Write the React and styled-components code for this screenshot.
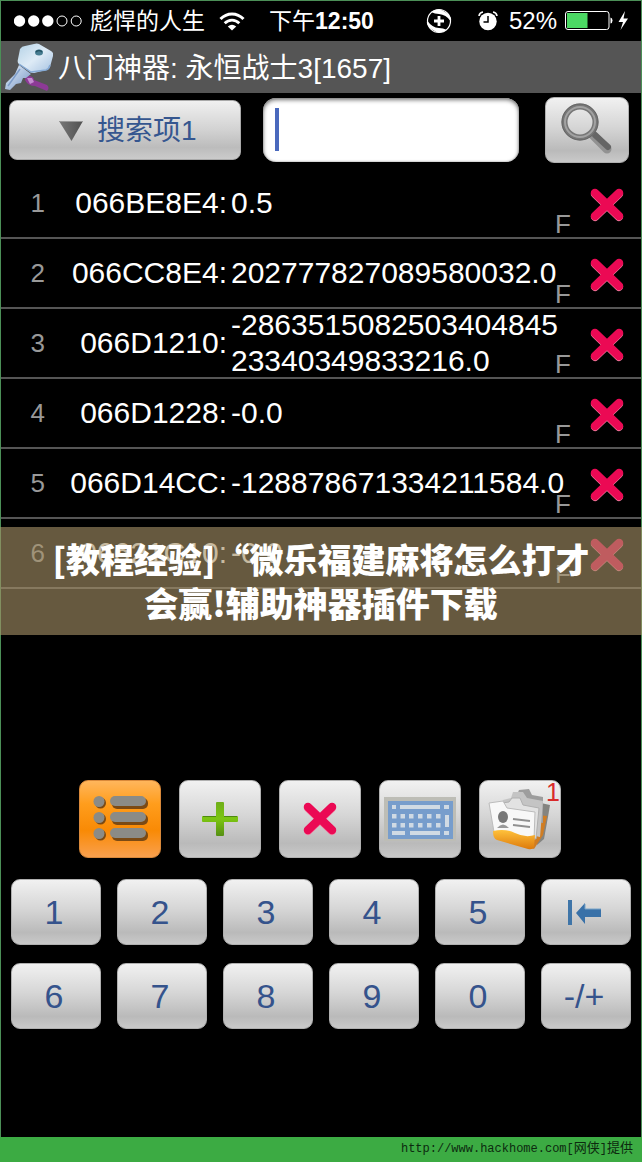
import React, { useState } from "react";
import styled, { createGlobalStyle } from "styled-components";

const GlobalStyle = createGlobalStyle`
  * {
    box-sizing: border-box;
  }
  body {
    margin: 0;
    background: #000;
    color: #fff;
    font-family: "Liberation Sans", "Noto Sans CJK SC", sans-serif;
  }
  button, input, select {
    font-family: inherit;
  }
`;

const Screen = styled.div`
  min-height: 100vh;
  display: flex;
  flex-direction: column;
`;
const Device = styled.main`
  flex: 1;
  display: flex;
  flex-direction: column;
  border: 1px solid #4b8f57;
  border-bottom: 0;
`;

const StatusBar = styled.header`
  height: 40px;
  padding: 0 12px 0 13px;
  display: grid;
  grid-template-columns: 1fr auto 1fr;
  align-items: center;
  font-size: 23px;
  line-height: 40px;
`;
const StatusGroup = styled.div`
  display: flex;
  align-items: center;
  justify-content: ${(props) => (props.$end ? "flex-end" : "flex-start")};
  svg {
    flex: none;
  }
`;
const Carrier = styled.span`
  margin: 0 14px 0 8px;
  white-space: nowrap;
`;
const Clock = styled.time`
  white-space: nowrap;
  b {
    font-weight: 700;
  }
`;
const Percent = styled.span`
  margin: 0 8px 0 11px;
  font-size: 24px;
`;
const Rotation = styled.svg`
  margin-right: 26px;
`;

const TitleBar = styled.div`
  height: 52px;
  padding-left: 4px;
  display: flex;
  align-items: center;
  gap: 5px;
  background: #555;
  h1 {
    margin: 0;
    padding-top: 4px;
    font-size: 28px;
    line-height: 48px;
    font-weight: 400;
  }
`;

const SearchBar = styled.form`
  height: 76px;
  padding: 0 12px 2px 8px;
  display: grid;
  grid-template-columns: 232fr 256fr 88px;
  column-gap: 22px;
  align-items: center;
`;
const SelectWrap = styled.div`
  position: relative;
  svg {
    position: absolute;
    left: 50px;
    top: 20px;
    pointer-events: none;
  }
`;
const SearchSelect = styled.select`
  appearance: none;
  width: 100%;
  height: 60px;
  padding: 0 0 0 87px;
  border: 1px solid #a9a9a9;
  border-radius: 8px;
  background: linear-gradient(#f0f0f0, #d2d2d2 50%, #bcbcbc 80%, #cbcbcb);
  color: #35568f;
  font-size: 28px;
`;
const FieldWrap = styled.div`
  position: relative;
`;
const SearchInput = styled.input`
  display: block;
  width: 100%;
  height: 64px;
  padding: 0 16px;
  border: 0;
  border-radius: 13px;
  background: #fff;
  box-shadow: inset 0 2px 4px #777, inset 0 0 2px #999;
  font-size: 30px;
  outline: none;
`;
const Caret = styled.span`
  position: absolute;
  left: 12px;
  top: 10px;
  width: 4px;
  height: 43px;
  background: #4a69bd;
`;

const GreyButton = styled.button`
  position: relative;
  display: flex;
  align-items: center;
  justify-content: center;
  padding: 0;
  border: 1px solid ${(props) => (props.$active ? "#d9893a" : "#b0b0b0")};
  border-radius: 9px;
  background: ${(props) =>
    props.$active
      ? "linear-gradient(#ffb65c, #ff9d1c 30%, #f98a05 65%, #f9a04e)"
      : "linear-gradient(#f1f1f1, #d6d6d6 45%, #bababa 82%, #c9c9c9)"};
  color: #35538c;
`;
const SearchButton = styled(GreyButton)`
  height: 66px;
  margin-left: 4px;
`;

const Results = styled.div`
  position: relative;
  flex: 1;
`;
const List = styled.ol`
  margin: 0;
  padding: 0;
  list-style: none;
`;
const Row = styled.li`
  border-bottom: 2px solid #555;
  display: grid;
  grid-template-columns: 52px 174px 1fr 70px;
  grid-template-rows: 68px;
  align-items: center;
  font-size: 30px;
  line-height: 36px;
`;
const Rank = styled.span`
  padding-right: 8px;
  color: #999;
  font-size: 26px;
  text-align: right;
`;
const Address = styled.span`
  text-align: right;
`;
const Value = styled.span`
  grid-area: 1 / 3;
  padding-left: 4px;
  word-break: break-all;
`;
const Type = styled.span`
  grid-area: 1 / 3;
  justify-self: end;
  align-self: end;
  color: #999;
  font-size: 26px;
  line-height: 26px;
`;
const RemoveButton = styled.button`
  grid-area: 1 / 4;
  height: 68px;
  padding: 4px 0 0 2px;
  display: flex;
  align-items: center;
  justify-content: center;
  border: 0;
  background: none;
`;

const Banner = styled.div`
  position: absolute;
  top: 358px;
  left: -1px;
  right: -1px;
  padding: 10px 50px;
  background: rgba(164, 143, 101, 0.62);
  font-family: "Noto Sans CJK SC", sans-serif;
  font-size: 34px;
  line-height: 44px;
  font-weight: 900;
  text-align: center;
  p {
    margin: 0;
    white-space: nowrap;
  }
`;

const Pad = styled.section`
  padding: 0 10px 108px;
`;
const Tools = styled.div`
  display: flex;
  justify-content: center;
  gap: 18px;
  margin: 0 2px 21px 0;
`;
const Tool = styled(GreyButton)`
  width: 82px;
  height: 78px;
`;
const Count = styled.span`
  position: absolute;
  top: -3px;
  right: 0;
  color: #d92a2a;
  font-size: 25px;
  line-height: 28px;
`;
const Keys = styled.div`
  display: grid;
  grid-template-columns: repeat(6, 1fr);
  gap: 18px 16px;
`;
const Key = styled(GreyButton)`
  height: 66px;
  padding-right: 4px;
  font-size: 34px;
`;

const Footer = styled.footer`
  height: 25px;
  padding: 0 9px 2px;
  display: flex;
  align-items: center;
  justify-content: flex-end;
  background: #3cab43;
  a {
    color: #0c2a0f;
    font-family: "Liberation Mono", "Noto Sans CJK SC", monospace;
    font-size: 12px;
    line-height: 20px;
    text-decoration: none;
  }
  span {
    font-size: 13px;
  }
`;

const ROWS = [
  { address: "066BE8E4", value: "0.5" },
  { address: "066CC8E4", value: "202777827089580032.0" },
  { address: "066D1210", value: "-286351508250340484523340349833216.0" },
  { address: "066D1228", value: "-0.0" },
  { address: "066D14CC", value: "-128878671334211584.0" },
  { address: "06621C10", value: "-0.0" },
];

function SignalIcon() {
  return (
    <svg width="68" height="14" viewBox="0 0 68 14">
      {[5.5, 19.7, 33.8].map((x) => (
        <circle key={x} cx={x} cy="7" r="5.7" fill="#fff" />
      ))}
      {[48, 62.2].map((x) => (
        <circle key={x} cx={x} cy="7" r="5" fill="none" stroke="#fff" />
      ))}
    </svg>
  );
}

function WifiIcon() {
  return (
    <svg width="26" height="19" viewBox="0 0 26 19" fill="none" stroke="#fff">
      <path d="M1.5 7C8 .2 18 .2 24.500 7" strokeWidth="3" />
      <path d="M5.700 11.200C10 7 16 7 20.300 11.200" strokeWidth="2.800" />
      <path d="M13 18.500L8.800 14.400Q13 11 17.200 14.400Z" fill="#fff" stroke="none" />
    </svg>
  );
}

function RotationIcon() {
  return (
    <Rotation width="26" height="26" viewBox="0 0 26 26" fill="none" stroke="#fff">
      <circle cx="13" cy="13" r="11.500" strokeWidth="1.200" />
      <path d="M5 4Q13-1 20 4.500T24.500 13Q20 6.500 13 6Q9 6 5 4Z" fill="#fff" stroke="none" />
      <path d="M21 22Q13 27 6 21.500T1.500 13Q6 19.500 13 20Q17 20 21 22Z" fill="#fff" stroke="none" />
      <path d="M13 8v10M8 13h10" strokeWidth="2.800" />
    </Rotation>
  );
}

function AlarmIcon() {
  return (
    <svg width="20" height="20" viewBox="0 0 20 20">
      <circle cx="10" cy="10.500" r="8.700" fill="#fff" />
      <path d="M1 5Q1.500 1.500 5 1M15 1q3.500.5 4 4" fill="none" stroke="#fff" strokeWidth="1.600" />
      <path d="M10 5v6H5.500" fill="none" stroke="#000" strokeWidth="1.500" />
    </svg>
  );
}

function BatteryIcon() {
  return (
    <svg width="64" height="22" viewBox="0 0 64 22">
      <rect x=".5" y="1.500" width="43.500" height="18" rx="2.500" fill="none" stroke="#fff" />
      <rect x="2" y="3" width="20.500" height="15" fill="#4cd964" />
      <path d="M45.500 7.500q2 .5 2 3t-2 3z" fill="#fff" />
      <path d="M60 1L53.500 12h4.500L55.500 20 63 8.500h-4.500z" fill="#fff" />
    </svg>
  );
}

function KeyIcon() {
  return (
    <svg width="48" height="48" viewBox="0 0 48 48">
      <defs>
        <linearGradient id="keyHead" x1="0" y1="0" x2="1" y2="1">
          <stop offset="0" stopColor="#b4d2e6" />
          <stop offset=".5" stopColor="#deebf6" />
          <stop offset="1" stopColor="#a3c0e0" />
        </linearGradient>
        <linearGradient id="keyBlade" x1="0" y1="0" x2="1" y2="1">
          <stop offset="0" stopColor="#e8f2fc" />
          <stop offset="1" stopColor="#7494c4" />
        </linearGradient>
      </defs>
      <path d="M20 37q0-4 5-4 4 1 4 4l13 5q3 3 0 6l-12-5q-7 0-10-6z" fill="#8d3a96" />
      <path d="M22 35l5 0 2 4-4 2z" fill="#c48bd0" />
      <path d="M14 22L26 31 21 35 18 35 16 40 11 41 5 47 0 46 1 40 10 31z" fill="url(#keyBlade)" />
      <path d="M15 26L3 43" stroke="#7d9cc8" strokeWidth="1.500" />
      <path d="M15 6Q17 3 20 3L29 1Q32 0 34 1L46 8Q49 10 48 13L45 24Q44 27 41 27L29 30Q27 30 25 29L14 21Q12 20 13 16Z" fill="url(#keyHead)" />
      <path d="M14 21l12 8 15-2q3-1 4-5" fill="none" stroke="#86abd6" strokeWidth="1.500" />
      <ellipse cx="34" cy="9.500" rx="4" ry="3" fill="#467c91" />
      <path d="M31 9q3-3 6 0" fill="none" stroke="#235363" strokeWidth="1.500" />
    </svg>
  );
}

function TriangleIcon() {
  return (
    <svg width="24" height="21" viewBox="0 0 24 21">
      <defs>
        <linearGradient id="tri" x1="0" x2="1">
          <stop offset="0" stopColor="#777" />
          <stop offset="1" stopColor="#505050" />
        </linearGradient>
      </defs>
      <path d="M0 1h24L12.500 21z" fill="url(#tri)" />
      <path d="M0 1.500h24" stroke="#999" />
    </svg>
  );
}

function SearchIcon() {
  return (
    <svg width="56" height="56" viewBox="0 0 56 56" fill="none">
      <path d="M34 33L48 47" stroke="#929292" strokeWidth="9" strokeLinecap="round" />
      <path d="M36 33L49 45" stroke="#656565" strokeWidth="6" strokeLinecap="round" />
      <circle cx="21" cy="20" r="15.500" stroke="#777" strokeWidth="6" />
      <circle cx="21" cy="20" r="15" stroke="#a2a2a2" strokeWidth="2" />
      <circle cx="21" cy="20" r="18" stroke="#666" />
    </svg>
  );
}

function CrossIcon() {
  return (
    <svg width="36" height="36" viewBox="0 0 36 36" fill="none" strokeLinecap="round">
      <path d="M6 7L30 30M30 7L6 30" stroke="#f27a9d" strokeWidth="8" />
      <path d="M6 6L30 29M30 6L6 29" stroke="#eb0954" strokeWidth="8.500" />
    </svg>
  );
}

function ListIcon() {
  const lines = [0, 16, 32];
  return (
    <svg width="56" height="48" viewBox="0 0 56 48">
      {lines.map((y) => (
        <g key={y}>
          <g fill="#7b4a14">
            <circle cx="8.500" cy={y + 8} r="5.500" />
            <rect x="20" y={y + 3} width="36" height="11" rx="5" />
          </g>
          <g fill="#8b8b86">
            <circle cx="7" cy={y + 6.500} r="5.500" />
            <rect x="18" y={y + 1} width="36" height="10" rx="5" />
          </g>
        </g>
      ))}
    </svg>
  );
}

function PlusIcon() {
  return (
    <svg width="36" height="36" viewBox="0 0 36 36">
      <defs>
        <linearGradient id="plus" x1="0" y1="0" x2="0" y2="1">
          <stop offset="0" stopColor="#6fae18" />
          <stop offset=".5" stopColor="#7cc512" />
          <stop offset="1" stopColor="#568f14" />
        </linearGradient>
      </defs>
      <path d="M15 1h6q1 0 1 1v13h13q1 0 1 1v4q0 1-1 1H22v13q0 1-1 1h-6q-1 0-1-1V21H1q-1 0-1-1v-4q0-1 1-1h13V2q0-1 1-1z" fill="url(#plus)" />
      <path d="M1 15.500h13M22 15.500h13" stroke="#4e8910" />
    </svg>
  );
}

function KeyboardIcon() {
  const cols = [8, 16.5, 25, 34, 43, 52];
  return (
    <svg width="72" height="44" viewBox="0 0 72 44">
      <rect width="72" height="44" fill="#bdbdb6" />
      <rect x="4" y="4" width="65" height="38" fill="#779dcc" />
      <g fill="#d0dae4">
        <rect x="8" y="8" width="4" height="4" />
        <rect x="16" y="8" width="40" height="4" />
        <rect x="60" y="8" width="5" height="4" />
        {[17, 26].map((y) =>
          cols.map((x) => <rect key={`${x}-${y}`} x={x} y={y} width="4.500" height="4.500" />)
        )}
        <rect x="61" y="18" width="4" height="12" />
        <rect x="8" y="34" width="13" height="4" />
        <rect x="26" y="34" width="30" height="4" />
        <rect x="60" y="34" width="5" height="4" />
      </g>
    </svg>
  );
}

function ContactsIcon() {
  return (
    <svg width="64" height="62" viewBox="0 0 64 62">
      <defs>
        <linearGradient id="folder" x1="0" y1="0" x2="0" y2="1">
          <stop offset="0" stopColor="#ffc23c" />
          <stop offset="1" stopColor="#dd7a0c" />
        </linearGradient>
      </defs>
      <path d="M48 14l14 3-2 12-4 22-7 6z" fill="#848480" />
      <path d="M50 27l9 1-4 19-9 14-5-2z" fill="#cf7d24" />
      <path d="M28 9l3-7 10-1 3 6 11 2 0 26-26-4z" fill="#9d9d9d" />
      <path d="M15 12l8-2 2-6 10 0 4 6 16 3-3 36-36-8z" fill="#c4c4c4" />
      <path d="M14 15l7-1 3-4 8 0 3 7 16 3-3 31-30-10z" fill="#e2e2e2" stroke="#b0b0b0" />
      <path d="M1 15l14-2 4 7 28 4-1 28L6 44z" fill="#f8f8f8" stroke="#bcbcbc" />
      <path d="M5 43q12-3 22 2t20 2l-1 12q-1 3-6 2L9 52q-4-1-4-9z" fill="url(#folder)" />
      <ellipse cx="15" cy="29" rx="5" ry="6" fill="#777" />
      <path d="M9 40q6-7 12 0z" fill="#999" />
      <path d="M25 31l17 2M25 37l17 2" stroke="#909090" strokeWidth="2" />
    </svg>
  );
}

function BackIcon() {
  return (
    <svg width="34" height="28" viewBox="0 0 34 28">
      <rect x="1" y="2" width="4" height="25" fill="#3f75a8" />
      <path d="M9 15L18 5v6h16v8H18v7z" fill="#3971a8" />
      <path d="M18 6v5h16" fill="none" stroke="#79a4c8" />
    </svg>
  );
}

function ResultRow({ rank, address, value }) {
  return (
    <Row>
      <Rank>{rank}</Rank>
      <Address>{address}:</Address>
      <Value>{value}</Value>
      <Type>F</Type>
      <RemoveButton type="button" aria-label="删除">
        <CrossIcon />
      </RemoveButton>
    </Row>
  );
}

export default function App() {
  const [query, setQuery] = useState("");

  return (
    <Screen>
      <GlobalStyle />
      <Device>
        <StatusBar>
          <StatusGroup>
            <SignalIcon />
            <Carrier>彪悍的人生</Carrier>
            <WifiIcon />
          </StatusGroup>
          <Clock>
            下午<b>12:50</b>
          </Clock>
          <StatusGroup $end>
            <RotationIcon />
            <AlarmIcon />
            <Percent>52%</Percent>
            <BatteryIcon />
          </StatusGroup>
        </StatusBar>
        <TitleBar>
          <KeyIcon />
          <h1>八门神器: 永恒战士3[1657]</h1>
        </TitleBar>
        <SearchBar onSubmit={(e) => e.preventDefault()}>
          <SelectWrap>
            <SearchSelect aria-label="搜索项">
              <option>搜索项1</option>
            </SearchSelect>
            <TriangleIcon />
          </SelectWrap>
          <FieldWrap>
            <SearchInput aria-label="搜索" value={query} onChange={(e) => setQuery(e.target.value)} />
            {!query && <Caret />}
          </FieldWrap>
          <SearchButton aria-label="搜索">
            <SearchIcon />
          </SearchButton>
        </SearchBar>
        <Results>
          <List>
            {ROWS.map((row, i) => (
              <ResultRow key={row.address} rank={i + 1} {...row} />
            ))}
          </List>
          <Banner>
            <p>[教程经验]“微乐福建麻将怎么打才</p>
            <p>会赢!辅助神器插件下载</p>
          </Banner>
        </Results>
        <Pad>
          <Tools>
            <Tool $active aria-label="列表">
              <ListIcon />
            </Tool>
            <Tool aria-label="添加">
              <PlusIcon />
            </Tool>
            <Tool aria-label="清除">
              <CrossIcon />
            </Tool>
            <Tool aria-label="键盘">
              <KeyboardIcon />
            </Tool>
            <Tool aria-label="存档">
              <ContactsIcon />
              <Count>1</Count>
            </Tool>
          </Tools>
          <Keys>
            {["1", "2", "3", "4", "5"].map((n) => (
              <Key key={n}>{n}</Key>
            ))}
            <Key aria-label="退格">
              <BackIcon />
            </Key>
            {["6", "7", "8", "9", "0", "-/+"].map((n) => (
              <Key key={n}>{n}</Key>
            ))}
          </Keys>
        </Pad>
      </Device>
      <Footer>
        <a href="http://www.hackhome.com">
          http://www.hackhome.com[<span>网侠</span>]<span>提供</span>
        </a>
      </Footer>
    </Screen>
  );
}
